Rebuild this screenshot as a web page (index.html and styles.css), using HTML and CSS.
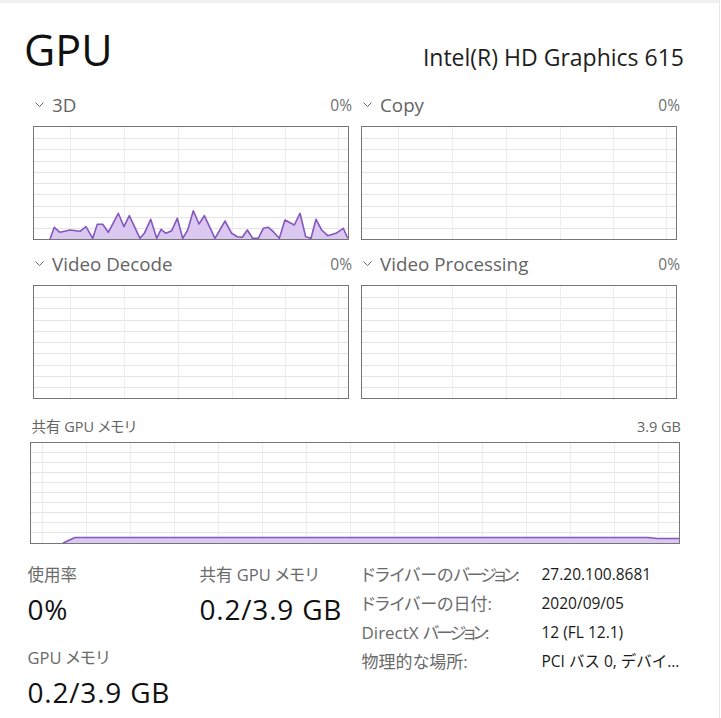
FILE: index.html
```html
<!DOCTYPE html>
<html lang="ja">
<head>
<meta charset="utf-8">
<title>GPU</title>
<link rel="stylesheet" href="styles.css">
</head>
<body>
<div class="window">
  <header class="head">
    <h1 class="title">GPU</h1>
    <div class="model">Intel(R) HD Graphics 615</div>
  </header>

  <div class="engines">
    <section class="engine">
      <div class="eng-head">
        <span class="eng-name"><svg class="chev" width="9" height="6" viewBox="0 0 9 6"><polyline points="0.5,0.5 4.5,4.5 8.5,0.5" /></svg>3D</span>
        <span class="eng-pct">0%</span>
      </div>
      <div class="graph">
        <svg class="plot" width="314" height="112" viewBox="0 0 314 112">
          <g class="grid-h">
            <line x1="0" x2="314" y1="11.5" y2="11.5"/><line x1="0" x2="314" y1="22.5" y2="22.5"/><line x1="0" x2="314" y1="34.5" y2="34.5"/><line x1="0" x2="314" y1="45.5" y2="45.5"/><line x1="0" x2="314" y1="56.5" y2="56.5"/><line x1="0" x2="314" y1="67.5" y2="67.5"/><line x1="0" x2="314" y1="79.5" y2="79.5"/><line x1="0" x2="314" y1="90.5" y2="90.5"/><line x1="0" x2="314" y1="101.5" y2="101.5"/>
          </g>
          <g class="grid-v">
            <line y1="0" y2="112" x1="36.5" x2="36.5"/><line y1="0" y2="112" x1="90.5" x2="90.5"/><line y1="0" y2="112" x1="144.5" x2="144.5"/><line y1="0" y2="112" x1="198.5" x2="198.5"/><line y1="0" y2="112" x1="251.5" x2="251.5"/><line y1="0" y2="112" x1="304.5" x2="304.5"/>
          </g>
          <polygon class="area" points="16,112 20.3,100.3 26,105.3 36,103 46,104.3 52,99.7 58.7,111.3 63.3,97.3 68.7,97.3 74.3,105.3 84.3,86.3 90,99.7 95.3,88.7 106,111.3 110.3,106.3 116.7,92.3 122.7,111.3 127,102.3 132,106.3 137.7,103.7 143.3,91.3 148.7,111.3 153.7,103 159.3,83.7 165,97 170.3,88.7 181,111.3 191,94 197.7,106.3 203.3,109.7 208.3,110.3 213.3,103 218.7,111.3 224.3,111.3 229.3,101.3 234.3,100.3 239.3,104.7 245.3,111.3 251,93 260.3,98 266,86.3 271.7,109.7 277,111.3 282,92.3 287.7,103 293.7,108.7 302,106.3 309.3,101.3 313.7,111.3 313.7,112"/>
          <polyline class="line" points="16,112 20.3,100.3 26,105.3 36,103 46,104.3 52,99.7 58.7,111.3 63.3,97.3 68.7,97.3 74.3,105.3 84.3,86.3 90,99.7 95.3,88.7 106,111.3 110.3,106.3 116.7,92.3 122.7,111.3 127,102.3 132,106.3 137.7,103.7 143.3,91.3 148.7,111.3 153.7,103 159.3,83.7 165,97 170.3,88.7 181,111.3 191,94 197.7,106.3 203.3,109.7 208.3,110.3 213.3,103 218.7,111.3 224.3,111.3 229.3,101.3 234.3,100.3 239.3,104.7 245.3,111.3 251,93 260.3,98 266,86.3 271.7,109.7 277,111.3 282,92.3 287.7,103 293.7,108.7 302,106.3 309.3,101.3 313.7,111.3"/>
        </svg>
      </div>
    </section>

    <section class="engine">
      <div class="eng-head">
        <span class="eng-name"><svg class="chev" width="9" height="6" viewBox="0 0 9 6"><polyline points="0.5,0.5 4.5,4.5 8.5,0.5" /></svg>Copy</span>
        <span class="eng-pct">0%</span>
      </div>
      <div class="graph">
        <svg class="plot" width="314" height="112" viewBox="0 0 314 112">
          <g class="grid-h">
            <line x1="0" x2="314" y1="11.5" y2="11.5"/><line x1="0" x2="314" y1="22.5" y2="22.5"/><line x1="0" x2="314" y1="34.5" y2="34.5"/><line x1="0" x2="314" y1="45.5" y2="45.5"/><line x1="0" x2="314" y1="56.5" y2="56.5"/><line x1="0" x2="314" y1="67.5" y2="67.5"/><line x1="0" x2="314" y1="79.5" y2="79.5"/><line x1="0" x2="314" y1="90.5" y2="90.5"/><line x1="0" x2="314" y1="101.5" y2="101.5"/>
          </g>
          <g class="grid-v">
            <line y1="0" y2="112" x1="36.5" x2="36.5"/><line y1="0" y2="112" x1="90.5" x2="90.5"/><line y1="0" y2="112" x1="144.5" x2="144.5"/><line y1="0" y2="112" x1="198.5" x2="198.5"/><line y1="0" y2="112" x1="251.5" x2="251.5"/><line y1="0" y2="112" x1="304.5" x2="304.5"/>
          </g>
        </svg>
      </div>
    </section>

    <section class="engine">
      <div class="eng-head">
        <span class="eng-name"><svg class="chev" width="9" height="6" viewBox="0 0 9 6"><polyline points="0.5,0.5 4.5,4.5 8.5,0.5" /></svg>Video Decode</span>
        <span class="eng-pct">0%</span>
      </div>
      <div class="graph">
        <svg class="plot" width="314" height="112" viewBox="0 0 314 112">
          <g class="grid-h">
            <line x1="0" x2="314" y1="11.5" y2="11.5"/><line x1="0" x2="314" y1="22.5" y2="22.5"/><line x1="0" x2="314" y1="34.5" y2="34.5"/><line x1="0" x2="314" y1="45.5" y2="45.5"/><line x1="0" x2="314" y1="56.5" y2="56.5"/><line x1="0" x2="314" y1="67.5" y2="67.5"/><line x1="0" x2="314" y1="79.5" y2="79.5"/><line x1="0" x2="314" y1="90.5" y2="90.5"/><line x1="0" x2="314" y1="101.5" y2="101.5"/>
          </g>
          <g class="grid-v">
            <line y1="0" y2="112" x1="36.5" x2="36.5"/><line y1="0" y2="112" x1="90.5" x2="90.5"/><line y1="0" y2="112" x1="144.5" x2="144.5"/><line y1="0" y2="112" x1="198.5" x2="198.5"/><line y1="0" y2="112" x1="251.5" x2="251.5"/><line y1="0" y2="112" x1="304.5" x2="304.5"/>
          </g>
        </svg>
      </div>
    </section>

    <section class="engine">
      <div class="eng-head">
        <span class="eng-name"><svg class="chev" width="9" height="6" viewBox="0 0 9 6"><polyline points="0.5,0.5 4.5,4.5 8.5,0.5" /></svg>Video Processing</span>
        <span class="eng-pct">0%</span>
      </div>
      <div class="graph">
        <svg class="plot" width="314" height="112" viewBox="0 0 314 112">
          <g class="grid-h">
            <line x1="0" x2="314" y1="11.5" y2="11.5"/><line x1="0" x2="314" y1="22.5" y2="22.5"/><line x1="0" x2="314" y1="34.5" y2="34.5"/><line x1="0" x2="314" y1="45.5" y2="45.5"/><line x1="0" x2="314" y1="56.5" y2="56.5"/><line x1="0" x2="314" y1="67.5" y2="67.5"/><line x1="0" x2="314" y1="79.5" y2="79.5"/><line x1="0" x2="314" y1="90.5" y2="90.5"/><line x1="0" x2="314" y1="101.5" y2="101.5"/>
          </g>
          <g class="grid-v">
            <line y1="0" y2="112" x1="36.5" x2="36.5"/><line y1="0" y2="112" x1="90.5" x2="90.5"/><line y1="0" y2="112" x1="144.5" x2="144.5"/><line y1="0" y2="112" x1="198.5" x2="198.5"/><line y1="0" y2="112" x1="251.5" x2="251.5"/><line y1="0" y2="112" x1="304.5" x2="304.5"/>
          </g>
        </svg>
      </div>
    </section>
  </div>

  <section class="shared">
    <div class="shared-head">
      <span class="shared-name">共有 GPU メモリ</span>
      <span class="shared-max">3.9 GB</span>
    </div>
    <div class="mem-graph">
      <svg class="plot" width="648" height="100" viewBox="0 0 648 100">
        <g class="grid-h">
          <line x1="0" x2="648" y1="9.5" y2="9.5"/><line x1="0" x2="648" y1="19.5" y2="19.5"/><line x1="0" x2="648" y1="29.5" y2="29.5"/><line x1="0" x2="648" y1="39.5" y2="39.5"/><line x1="0" x2="648" y1="49.5" y2="49.5"/><line x1="0" x2="648" y1="59.5" y2="59.5"/><line x1="0" x2="648" y1="69.5" y2="69.5"/><line x1="0" x2="648" y1="79.5" y2="79.5"/><line x1="0" x2="648" y1="89.5" y2="89.5"/>
        </g>
        <g class="grid-v">
          <line y1="0" y2="100" x1="11.5" x2="11.5"/><line y1="0" y2="100" x1="55.5" x2="55.5"/><line y1="0" y2="100" x1="99.5" x2="99.5"/><line y1="0" y2="100" x1="143.5" x2="143.5"/><line y1="0" y2="100" x1="187.5" x2="187.5"/><line y1="0" y2="100" x1="231.5" x2="231.5"/><line y1="0" y2="100" x1="275.5" x2="275.5"/><line y1="0" y2="100" x1="319.5" x2="319.5"/><line y1="0" y2="100" x1="363.5" x2="363.5"/><line y1="0" y2="100" x1="407.5" x2="407.5"/><line y1="0" y2="100" x1="451.5" x2="451.5"/><line y1="0" y2="100" x1="495.5" x2="495.5"/><line y1="0" y2="100" x1="539.5" x2="539.5"/><line y1="0" y2="100" x1="583.5" x2="583.5"/><line y1="0" y2="100" x1="627.5" x2="627.5"/>
        </g>
        <polygon class="area" points="32,100 44,94.5 617,94.5 626,95.5 648,95.5 648,100"/>
        <polyline class="line" points="32,100 44,94.5 617,94.5 626,95.5 648,95.5"/>
      </svg>
    </div>
  </section>

  <section class="stats">
    <div class="stat-grid">
      <div class="stat">
        <div class="stat-label">使用率</div>
        <div class="stat-value">0%</div>
      </div>
      <div class="stat">
        <div class="stat-label">共有 GPU メモリ</div>
        <div class="stat-value">0.2/3.9 GB</div>
      </div>
      <div class="stat">
        <div class="stat-label">GPU メモリ</div>
        <div class="stat-value">0.2/3.9 GB</div>
      </div>
    </div>
    <dl class="info">
      <div class="info-row"><dt>ドライバーの<span class="narrow">バージョン</span>:</dt><dd>27.20.100.8681</dd></div>
      <div class="info-row"><dt>ドライバーの日付:</dt><dd>2020/09/05</dd></div>
      <div class="info-row"><dt>DirectX <span class="narrow">バージョン</span>:</dt><dd>12 (FL 12.1)</dd></div>
      <div class="info-row"><dt>物理的な場所:</dt><dd>PCI バス 0, デバイ…</dd></div>
    </dl>
  </section>
</div>
</body>
</html>
```

FILE: styles.css
```css
html, body {
  margin: 0;
  padding: 0;
  background: #ffffff;
}

body {
  font-family: "Open Sans", "Noto Sans CJK JP", sans-serif;
  color: #1a1a1a;
}

.window {
  box-sizing: border-box;
  width: 720px;
  height: 718px;
  border-top: 3px solid #efefef;
  border-right: 1px solid #e6e6e6;
  overflow: hidden;
}

/* header */
.head {
  display: flex;
  justify-content: space-between;
  align-items: baseline;
  margin: 21px 35px 0 24px;
  height: 52px;
}

.title {
  margin: 0;
  font-weight: 400;
  font-size: 43px;
  line-height: 52px;
  color: #111111;
}

.model {
  font-size: 23px;
  line-height: 30px;
  color: #1e1e1e;
}

/* engines */
.engines {
  display: grid;
  grid-template-columns: 316px 316px;
  column-gap: 12px;
  row-gap: 12px;
  margin: 17px 0 0 33px;
}

.eng-head {
  display: flex;
  justify-content: space-between;
  height: 24px;
  margin: 0 -3px 9px 0;
}

.eng-name {
  display: flex;
  align-items: flex-start;
  font-size: 18.8px;
  line-height: 24px;
  color: #646464;
}

.chev {
  flex: none;
  margin: 9px 8.5px 0 1.5px;
  fill: none;
  stroke: #666666;
  stroke-width: 1;
}

.eng-pct {
  font-size: 15.5px;
  line-height: 24px;
  color: #707070;
}

.graph,
.mem-graph {
  border: 1px solid #767676;
  background: #ffffff;
}

.graph {
  width: 314px;
  height: 112px;
}

.plot {
  display: block;
}

.grid-h line {
  stroke: #e4e4e4;
  stroke-width: 1;
}

.grid-v line {
  stroke: #ededed;
  stroke-width: 1;
}

.area {
  fill: #dac8f1;
  stroke: none;
}

.line {
  fill: none;
  stroke: #8656be;
  stroke-width: 1.6;
  stroke-linejoin: round;
}

/* shared memory */
.shared {
  width: 650px;
  margin: 18px 0 0 30px;
}

.shared-head {
  display: flex;
  justify-content: space-between;
  height: 20px;
  margin: 0 -1px 5px 0;
  padding-left: 1.5px;
}

.shared-name {
  font-size: 14.5px;
  line-height: 20px;
  color: #646464;
  font-feature-settings: "palt";
}

.shared-max {
  font-size: 14.5px;
  line-height: 20px;
  color: #646464;
}

.mem-graph {
  width: 648px;
  height: 100px;
}

/* stats */
.stats {
  display: flex;
  margin: 20px 0 0 27.5px;
}

.stat-grid {
  display: grid;
  grid-template-columns: 172px 162px;
  row-gap: 20px;
  align-content: start;
}

.stat-label {
  font-size: 16.5px;
  line-height: 22px;
  color: #6a6a6a;
  font-feature-settings: "palt";
}

.stat-value {
  margin-top: 6px;
  font-size: 28px;
  line-height: 35px;
  letter-spacing: 0.8px;
  color: #111111;
}

.info {
  margin: -4px 0 0 0;
  padding: 0;
}

.info-row {
  display: flex;
  height: 29px;
}

.info dt {
  width: 180px;
  flex: none;
  font-size: 17px;
  line-height: 29px;
  color: #6a6a6a;
  font-feature-settings: "palt";
}

.narrow {
  letter-spacing: -3px;
}

.info dd {
  margin: 0;
  font-size: 15.5px;
  line-height: 29px;
  color: #1a1a1a;
  white-space: nowrap;
}
```
